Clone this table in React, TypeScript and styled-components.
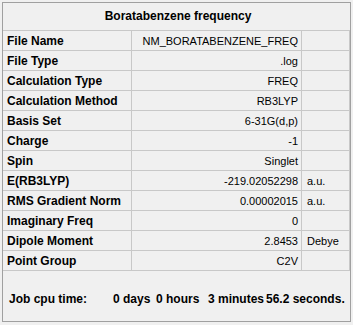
import React from "react";
import styled, { createGlobalStyle } from "styled-components";

const GlobalStyle = createGlobalStyle`
  html, body {
    margin: 0;
    padding: 0;
    background: #f0f0f0;
  }
  body {
    padding: 2px 0 0 2px;
    font-family: "Liberation Sans", Arial, sans-serif;
    color: #000;
  }
`;

type Row = { label: string; value: string; unit?: string };

const rows: Row[] = [
  { label: "File Name", value: "NM_BORATABENZENE_FREQ" },
  { label: "File Type", value: ".log" },
  { label: "Calculation Type", value: "FREQ" },
  { label: "Calculation Method", value: "RB3LYP" },
  { label: "Basis Set", value: "6-31G(d,p)" },
  { label: "Charge", value: "-1" },
  { label: "Spin", value: "Singlet" },
  { label: "E(RB3LYP)", value: "-219.02052298", unit: "a.u." },
  { label: "RMS Gradient Norm", value: "0.00002015", unit: "a.u." },
  { label: "Imaginary Freq", value: "0" },
  { label: "Dipole Moment", value: "2.8453", unit: "Debye" },
  { label: "Point Group", value: "C2V" },
];

function App() {
  return (
    <>
      <GlobalStyle />
      <Panel>
        <Table>
          <Title>Boratabenzene frequency</Title>
          {rows.map((r) => (
            <React.Fragment key={r.label}>
              <Label>{r.label}</Label>
              <Value>{r.value}</Value>
              <Unit>{r.unit}</Unit>
            </React.Fragment>
          ))}
        </Table>
        <Footer>
          <FooterPart $width={104}>Job cpu time:</FooterPart>
          <FooterPart $width={43}>0 days</FooterPart>
          <FooterPart $width={52}>0 hours</FooterPart>
          <FooterPart $width={58}>3 minutes</FooterPart>
          <FooterPart>56.2 seconds.</FooterPart>
        </Footer>
      </Panel>
    </>
  );
}

export default App;

const Panel = styled.div`
  width: 349px;
  height: 320px;
  box-sizing: border-box;
  border: 1px solid #a0a0a0;
  background: #f0f0f0;
  display: flex;
  flex-direction: column;
`;

const Table = styled.div`
  display: grid;
  grid-template-columns: 129px 170px 48px;
  grid-template-rows: 28px;
  grid-auto-rows: 20px;
`;

const Cell = styled.div`
  box-sizing: border-box;
  border-right: 1px solid #c8c8c8;
  border-bottom: 1px solid #c8c8c8;
  display: flex;
  align-items: center;
  font-size: 11px;
  white-space: nowrap;
  overflow: hidden;
`;

const Title = styled(Cell)`
  grid-column: 1 / -1;
  justify-content: center;
  font-weight: bold;
  font-size: 12px;
  border-right: none;
  padding: 0 0 1px 3px;
`;

const Label = styled(Cell)`
  font-weight: bold;
  font-size: 12px;
  padding-left: 4px;
`;

const Value = styled(Cell)`
  justify-content: flex-end;
  padding-right: 3px;
`;

const Unit = styled(Cell)`
  padding-left: 5px;
`;

const Footer = styled.div`
  flex: 1;
  display: flex;
  align-items: center;
  padding: 6px 0 0 6px;
  font-weight: bold;
  font-size: 12px;
  white-space: nowrap;
`;

const FooterPart = styled.span<{ $width?: number }>`
  flex-shrink: 0;
  width: ${(p) => (p.$width ? `${p.$width}px` : "auto")};
`;
